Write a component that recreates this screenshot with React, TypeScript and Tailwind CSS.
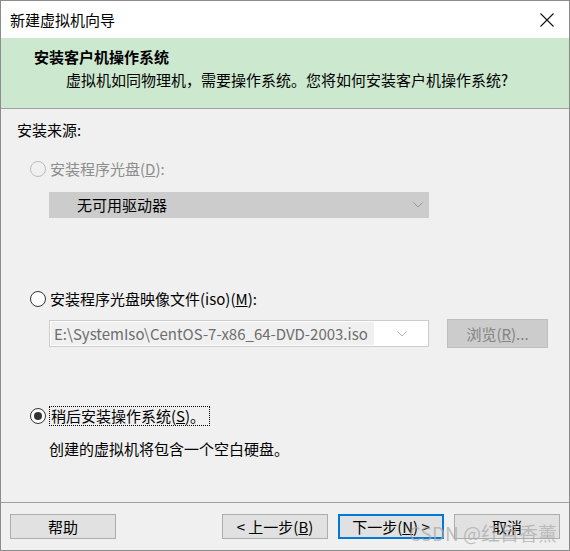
import React from "react";

const font = { fontFamily: '"Noto Sans CJK SC", "Noto Sans", sans-serif' };

function Radio({ checked, disabled }: { checked?: boolean; disabled?: boolean }) {
  return (
    <span
      className={`flex h-[16px] w-[16px] items-center justify-center rounded-full border ${
        disabled ? "border-[#bcbcbc] bg-[#f0f0f0]" : "border-[#333] bg-white"
      }`}
    >
      {checked && <span className="h-[8px] w-[8px] rounded-full bg-[#333]" />}
    </span>
  );
}

function Chevron({ color }: { color: string }) {
  return (
    <svg width="10" height="6" viewBox="0 0 10 6">
      <path d="M0.5 0.5 L5 5 L9.5 0.5" fill="none" stroke={color} strokeWidth="1" />
    </svg>
  );
}

function Btn({ children, primary }: { children: React.ReactNode; primary?: boolean }) {
  return (
    <div
      className={`flex h-[25px] w-[106px] items-center justify-center bg-[#e1e1e1] text-[15px] text-black ${
        primary ? "border-2 border-[#0078d7]" : "border border-[#adadad]"
      }`}
    >
      {children}
    </div>
  );
}

export default function App() {
  return (
    <div
      className="relative flex h-[551px] w-[570px] flex-col overflow-hidden border border-[#8c8c8c] bg-[#f0f0f0] text-[15px] leading-[20px] text-black"
      style={font}
    >
      {/* title bar */}
      <div className="flex h-[37px] shrink-0 items-center justify-between bg-white pl-[9px] pr-[15px]">
        <span>新建虚拟机向导</span>
        <svg width="14" height="14" viewBox="0 0 14 14">
          <path d="M0.5 0.5 L13.5 13.5 M13.5 0.5 L0.5 13.5" stroke="#111" strokeWidth="1.1" />
        </svg>
      </div>

      {/* header */}
      <div className="flex h-[71px] shrink-0 flex-col border-b border-[#a0a0a0] bg-[#cce8cf] pt-[9px]">
        <div className="pl-[33px] font-bold">安装客户机操作系统</div>
        <div className="mt-[3px] pl-[65px]">虚拟机如同物理机，需要操作系统。您将如何安装客户机操作系统?</div>
      </div>

      {/* body */}
      <div className="flex flex-1 flex-col border-b border-[#a0a0a0] pt-[11px]">
        <div className="pl-[16px]">安装来源:</div>

        <div className="mt-[19px] flex items-center gap-[4px] pl-[29px] text-[#8d8d8d]">
          <Radio disabled />
          <span>
            安装程序光盘(<span className="underline">D</span>):
          </span>
        </div>

        <div className="ml-[48px] mt-[13px] flex h-[26px] w-[380px] items-center justify-between border border-[#cccccc] bg-[#cccccc] pl-[27px] pr-[5px]">
          <span>无可用驱动器</span>
          <Chevron color="#9a9a9a" />
        </div>

        <div className="mt-[71px] flex items-center gap-[4px] pl-[29px]">
          <Radio />
          <span>
            安装程序光盘映像文件(iso)(<span className="underline">M</span>):
          </span>
        </div>

        <div className="ml-[48px] mt-[10px] flex items-center">
          <div className="flex h-[27px] w-[380px] items-center border border-[#cccccc] bg-white p-[1px]">
            <div className="flex h-full w-[323px] items-center bg-[#f0f0f0] pl-[3px] text-[#6d6d6d]">
              E:\SystemIso\CentOS-7-x86_64-DVD-2003.iso
            </div>
            <div className="flex flex-1 items-center justify-center pl-[2px]">
              <Chevron color="#b5b5b5" />
            </div>
          </div>
          <div className="ml-[18px] flex h-[29px] w-[101px] items-center justify-center border border-[#bfbfbf] bg-[#cccccc] text-[#838383]">
            浏览(<span className="underline">R</span>)...
          </div>
        </div>

        <div className="mt-[58px] flex items-center gap-[3px] pl-[29px]">
          <Radio checked />
          <span className="border border-dotted border-black pl-[1px] pr-[4px] leading-[18px]">
            稍后安装操作系统(<span className="underline">S</span>)。
          </span>
        </div>

        <div className="mt-[13px] pl-[48px]">创建的虚拟机将包含一个空白硬盘。</div>
      </div>

      {/* footer */}
      <div className="flex h-[47px] shrink-0 items-start px-[9px] pt-[11px]">
        <Btn>帮助</Btn>
        <div className="ml-auto flex gap-[10px]">
          <Btn>
            &lt; 上一步(<span className="underline">B</span>)
          </Btn>
          <Btn primary>
            下一步(<span className="underline">N</span>) &gt;
          </Btn>
          <Btn>取消</Btn>
        </div>
      </div>

      <div className="pointer-events-none absolute bottom-[7px] right-[12px] text-[19px] text-[#a8a8a8]/70">
        CSDN @红目香薰
      </div>
    </div>
  );
}
